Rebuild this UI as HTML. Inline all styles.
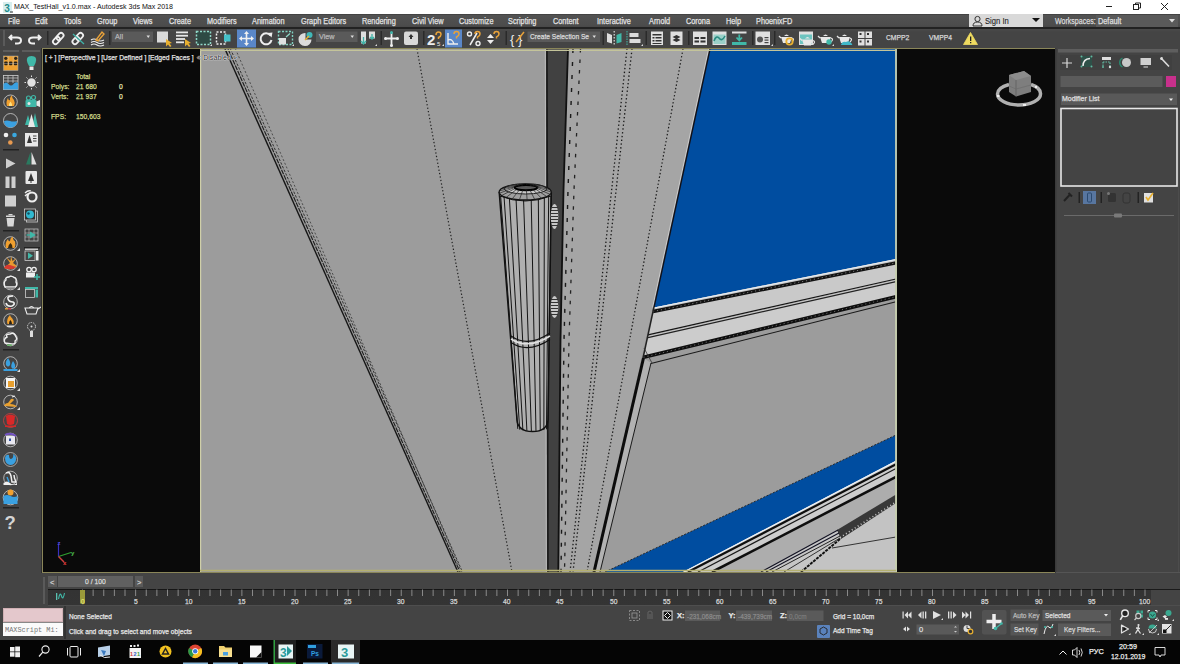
<!DOCTYPE html>
<html><head><meta charset="utf-8"><style>
html,body{margin:0;padding:0;}
body{width:1180px;height:664px;overflow:hidden;background:#444;position:relative;font-family:"Liberation Sans", sans-serif;}
.r{position:absolute;}
.t{position:absolute;white-space:pre;transform-origin:0 50%;-webkit-text-stroke:0.25px currentColor;}
</style></head><body>
<div class="r" style="left:0px;top:0px;width:1180px;height:14px;background:#ffffff;"></div><svg class="r" style="left:3px;top:2px;" width="10" height="11" viewBox="0 0 10 11"><rect x="0" y="0" width="9" height="11" fill="#d8eeee"/><text x="1.2" y="9.5" font-family="Liberation Sans" font-weight="bold" font-size="10" fill="#1e8c8c">3</text><rect x="7" y="9.5" width="3" height="1" fill="#333"/></svg><div class="t" style="left:14px;top:1.5px;font-size:8px;line-height:10px;color:#111;transform:scaleX(0.885);-webkit-text-stroke:0;">MAX_TestHall_v1.0.max - Autodesk 3ds Max 2018</div><svg class="r" style="left:1100px;top:0px;" width="80" height="14" viewBox="0 0 80 14"><line x1="6" y1="6.5" x2="12" y2="6.5" stroke="#222" stroke-width="1"/><rect x="33.5" y="4.5" width="5" height="5" fill="none" stroke="#222"/><path d="M35.5 4.5 V3 H40.5 V8 H38.5" fill="none" stroke="#222"/><path d="M61 3 L68 10 M68 3 L61 10" stroke="#222" stroke-width="1"/></svg><div class="r" style="left:0px;top:14px;width:1180px;height:13.5px;background:linear-gradient(#3c3c3c 0px,#525252 1.5px,#4c4c4c 11px,#484848 13px);"></div><div class="t" style="left:8px;top:16px;font-size:8.5px;line-height:10.5px;color:#e4e4e4;transform:scaleX(0.86);">File</div><div class="t" style="left:35px;top:16px;font-size:8.5px;line-height:10.5px;color:#e4e4e4;transform:scaleX(0.86);">Edit</div><div class="t" style="left:64px;top:16px;font-size:8.5px;line-height:10.5px;color:#e4e4e4;transform:scaleX(0.86);">Tools</div><div class="t" style="left:97px;top:16px;font-size:8.5px;line-height:10.5px;color:#e4e4e4;transform:scaleX(0.86);">Group</div><div class="t" style="left:133px;top:16px;font-size:8.5px;line-height:10.5px;color:#e4e4e4;transform:scaleX(0.86);">Views</div><div class="t" style="left:169px;top:16px;font-size:8.5px;line-height:10.5px;color:#e4e4e4;transform:scaleX(0.86);">Create</div><div class="t" style="left:207px;top:16px;font-size:8.5px;line-height:10.5px;color:#e4e4e4;transform:scaleX(0.86);">Modifiers</div><div class="t" style="left:252px;top:16px;font-size:8.5px;line-height:10.5px;color:#e4e4e4;transform:scaleX(0.86);">Animation</div><div class="t" style="left:301px;top:16px;font-size:8.5px;line-height:10.5px;color:#e4e4e4;transform:scaleX(0.86);">Graph Editors</div><div class="t" style="left:361.5px;top:16px;font-size:8.5px;line-height:10.5px;color:#e4e4e4;transform:scaleX(0.86);">Rendering</div><div class="t" style="left:412px;top:16px;font-size:8.5px;line-height:10.5px;color:#e4e4e4;transform:scaleX(0.86);">Civil View</div><div class="t" style="left:458.5px;top:16px;font-size:8.5px;line-height:10.5px;color:#e4e4e4;transform:scaleX(0.86);">Customize</div><div class="t" style="left:508px;top:16px;font-size:8.5px;line-height:10.5px;color:#e4e4e4;transform:scaleX(0.86);">Scripting</div><div class="t" style="left:552.5px;top:16px;font-size:8.5px;line-height:10.5px;color:#e4e4e4;transform:scaleX(0.86);">Content</div><div class="t" style="left:597px;top:16px;font-size:8.5px;line-height:10.5px;color:#e4e4e4;transform:scaleX(0.86);">Interactive</div><div class="t" style="left:649px;top:16px;font-size:8.5px;line-height:10.5px;color:#e4e4e4;transform:scaleX(0.86);">Arnold</div><div class="t" style="left:686px;top:16px;font-size:8.5px;line-height:10.5px;color:#e4e4e4;transform:scaleX(0.86);">Corona</div><div class="t" style="left:726px;top:16px;font-size:8.5px;line-height:10.5px;color:#e4e4e4;transform:scaleX(0.86);">Help</div><div class="t" style="left:756px;top:16px;font-size:8.5px;line-height:10.5px;color:#e4e4e4;transform:scaleX(0.86);">PhoenixFD</div><div class="r" style="left:969px;top:14px;width:74px;height:13.5px;background:#d9d9d9;"></div><svg class="r" style="left:972px;top:15px;" width="12" height="12" viewBox="0 0 12 12"><circle cx="5.5" cy="4" r="2.6" fill="none" stroke="#333" stroke-width="1"/><path d="M1 11 Q1 7 5.5 7 Q10 7 10 11 Z" fill="none" stroke="#333" stroke-width="1"/></svg><div class="t" style="left:985px;top:16px;font-size:8.5px;line-height:10.5px;color:#222;transform:scaleX(0.9);-webkit-text-stroke:0.1px #222;">Sign In</div><svg class="r" style="left:1032px;top:18px;" width="8" height="5" viewBox="0 0 8 5"><path d="M0 0 H8 L4 4 Z" fill="#111"/></svg><div class="t" style="left:1055px;top:16px;font-size:8.5px;line-height:10.5px;color:#dcdcdc;transform:scaleX(0.83);">Workspaces:</div><div class="r" style="left:1096px;top:14.5px;width:82px;height:12.5px;background:#5a5a5a;"></div><div class="t" style="left:1098px;top:16px;font-size:8.5px;line-height:10.5px;color:#e0e0e0;transform:scaleX(0.86);">Default</div><svg class="r" style="left:1169px;top:19px;" width="6" height="4" viewBox="0 0 6 4"><path d="M0 0 H6 L3 3.5 Z" fill="#ddd"/></svg><div class="r" style="left:0px;top:28px;width:1180px;height:20px;background:linear-gradient(#4c4c4c,#444 4px,#444);"></div><div class="r" style="left:0px;top:27px;width:1180px;height:1.5px;background:#222;"></div><div class="r" style="left:3px;top:30px;width:2px;height:16px;background:#5a5a5a;"></div><svg class="r" style="left:0;top:28px" width="1180" height="20" viewBox="0 28 1180 20"><path d="M12,35 L9.5,37.5 L12,40 M10,37.5 H17 Q21,37.5 21,40.5 Q21,43.5 17,43.5 H15" fill="none" stroke="#eee" stroke-width="2"/><path d="M38,35 L40.5,37.5 L38,40 M40,37.5 H33 Q29,37.5 29,40.5 Q29,43.5 33,43.5 H35" fill="none" stroke="#eee" stroke-width="2"/><rect x="47" y="31" width="1.5" height="14" fill="#2a2a2a"/><g fill="none" stroke="#eee" stroke-width="1.8"><rect x="52.5" y="38" width="8" height="5" rx="2.5" transform="rotate(-45 56.5 40.5)"/><rect x="56" y="34" width="8" height="5" rx="2.5" transform="rotate(-45 60 36.5)"/></g><g fill="none" stroke="#eee" stroke-width="1.8"><rect x="72" y="38" width="8" height="5" rx="2.5" transform="rotate(-45 76 40.5)"/><rect x="75.5" y="34" width="8" height="5" rx="2.5" transform="rotate(-45 79.5 36.5)"/></g><line x1="73" y1="34" x2="84" y2="44" stroke="#3fb3a8" stroke-width="1.3"/><g fill="none" stroke="#eee" stroke-width="1.2"><path d="M91,40 Q94,38 97,40 T104,40"/><path d="M91,42.5 Q94,40.5 97,42.5 T104,42.5"/><path d="M91,45 Q94,43 97,45 T104,45"/></g><path d="M96,40 L102,32 L104,34 L98,41 Z" fill="none" stroke="#e8a23a" stroke-width="1.4"/><rect x="109" y="31" width="1.5" height="14" fill="#2a2a2a"/><rect x="112" y="31.5" width="41" height="10.5" fill="#5a5a5a"/><path d="M146.5,35.5 H150 L148.25,38 Z" fill="#ddd"/><rect x="157" y="31.5" width="11" height="11" fill="#dadada"/><path d="M166,39 L166,46.5 L168,44.5 L170,47 L171.5,46 L169.5,43.5 L172,43 Z" fill="#e8b030"/><g fill="#e8e8e8"><rect x="176" y="31.5" width="12" height="1.8"/><rect x="176" y="34.8" width="12" height="1.8"/><rect x="176" y="38.1" width="9" height="1.8"/><rect x="176" y="41.4" width="8" height="1.8"/></g><path d="M185,39 L185,46.5 L187,44.5 L189,47 L190.5,46 L188.5,43.5 L191,43 Z" fill="#e8b030"/><rect x="196.5" y="31.5" width="14" height="13" fill="#2e4a44" stroke="#8fd8c8" stroke-width="1.5" stroke-dasharray="2,1.5"/><path d="M210,46 L212,44 L212,46 Z" fill="#ddd"/><rect x="216.5" y="32" width="9" height="12" fill="none" stroke="#eee" stroke-width="1.5" stroke-dasharray="2,1.5"/><rect x="224" y="34.5" width="6.5" height="7" fill="#46c0c8"/><rect x="237" y="29.5" width="19" height="18" fill="#5a87c8"/><g fill="#f0f0f0"><path d="M246.5,31 L249,34 H247.3 V37.7 H251 V36 L254,38.5 L251,41 V39.3 H247.3 V43 H249 L246.5,46 L244,43 H245.7 V39.3 H242 V41 L239,38.5 L242,36 V37.7 H245.7 V34 H244 Z"/></g><path d="M270.5,35.5 A5.5,5.5 0 1 0 271.5,40" fill="none" stroke="#eee" stroke-width="2"/><path d="M267.5,33 L272.5,32.5 L271.5,37.5 Z" fill="#eee"/><rect x="278.5" y="31.5" width="14" height="13" fill="none" stroke="#7fd0c0" stroke-width="1.4" stroke-dasharray="2,1.5"/><rect x="279" y="38" width="7" height="6.5" fill="#e0e0e0"/><path d="M286,37 L290,33.5" stroke="#8fd8c8" stroke-width="1.2"/><path d="M292,46 L294,44 L294,46 Z" fill="#ddd"/><path d="M305.5,33 A6.5,6.5 0 1 0 311.5,39.5 L305.5,39.5 Z" fill="#dcdcdc"/><circle cx="309.5" cy="35" r="3" fill="#40b8b8"/><path d="M305,40 L309,36" stroke="#e8b030" stroke-width="1.5"/><rect x="316" y="31.5" width="41.5" height="10.5" fill="#5a5a5a"/><path d="M350.5,35.5 H354 L352.25,38 Z" fill="#ddd"/><rect x="361" y="31.5" width="5" height="12" fill="#ddd"/><rect x="369" y="31.5" width="6" height="7" fill="#ddd"/><path d="M363.5,37 V44 M361,41 L363.5,44 L366,41" stroke="#3fb3a8" stroke-width="1.3" fill="none"/><path d="M372,34 V39 M370,37 L372,39 L374,37" stroke="#3fb3a8" stroke-width="1.3" fill="none"/><path d="M375,46 L377,44 L377,46 Z" fill="#ddd"/><rect x="380.5" y="31" width="1.5" height="14" fill="#2a2a2a"/><path d="M391.5,32 V46 M385,38.5 H398" stroke="#eee" stroke-width="1.8"/><circle cx="391.5" cy="32.5" r="1.5" fill="#3fb3a8"/><circle cx="391.5" cy="45.5" r="1.5" fill="#eee"/><circle cx="385.5" cy="38.5" r="1.5" fill="#eee"/><circle cx="397.5" cy="38.5" r="1.5" fill="#eee"/><rect x="404" y="31.5" width="14" height="13.5" rx="2" fill="#dadada"/><path d="M411,34 L413.5,37 H412 V39 H410 V37 H408.5 Z" fill="#333"/><rect x="423" y="31" width="1.5" height="14" fill="#2a2a2a"/><text x="427" y="45" font-family="Liberation Sans" font-size="15" font-weight="bold" fill="#eee">2</text><path d="M436,35 Q436,32 438.5,32 Q441,32 441,34.5 Q441,36.5 438.5,37.5 V39" fill="none" stroke="#e8a23a" stroke-width="1.5"/><text x="437" y="46" font-family="Liberation Sans" font-size="6" fill="#eee">5</text><path d="M442,46 L444,44 L444,46 Z" fill="#ddd"/><rect x="445" y="29.5" width="17" height="18" fill="#5a87c8"/><path d="M448,33 V44 H458 M448,40 Q452,38 454,44" fill="none" stroke="#eee" stroke-width="1.4"/><path d="M454,34 Q454,31.5 456.5,31.5 Q459,31.5 459,34 Q459,36 456.5,37 V38.5" fill="none" stroke="#e8a23a" stroke-width="1.5"/><circle cx="469.5" cy="34" r="2" fill="none" stroke="#eee" stroke-width="1.4"/><circle cx="478" cy="43.5" r="2" fill="none" stroke="#eee" stroke-width="1.4"/><line x1="470" y1="45" x2="477" y2="33" stroke="#eee" stroke-width="1.5"/><path d="M475,34 Q475,31.5 477.5,31.5 Q480,31.5 480,34 Q480,36 477.5,37 V38.5" fill="none" stroke="#e8a23a" stroke-width="1.5"/><path d="M487,38 L490.5,34 L494,38 Z M487,40 L490.5,44 L494,40 Z" fill="#eee"/><path d="M494,34 Q494,31.5 496.5,31.5 Q499,31.5 499,34 Q499,36 496.5,37 V38.5" fill="none" stroke="#e8a23a" stroke-width="1.5"/><rect x="505.5" y="31" width="1.5" height="14" fill="#2a2a2a"/><text x="510" y="43.5" font-family="Liberation Sans" font-size="13" fill="#eee">{</text><text x="518" y="43.5" font-family="Liberation Sans" font-size="13" fill="#eee">}</text><path d="M516,42 L524,32" stroke="#e8a23a" stroke-width="1.5"/><rect x="527.5" y="31.5" width="72.5" height="10.5" fill="#5a5a5a"/><path d="M592.5,35.5 H596 L594.25,38 Z" fill="#ddd"/><rect x="602.5" y="31" width="1.5" height="14" fill="#2a2a2a"/><path d="M607,33 L612,35 V43.5 L607,42 Z" fill="#ddd"/><path d="M621.5,33 L616.5,35 V43.5 L621.5,42 Z" fill="#40b8a8"/><path d="M614.2,31 V46" stroke="#ddd" stroke-width="1.2" stroke-dasharray="1.5,1.5"/><path d="M627,31 V46" stroke="#40b8a8" stroke-width="1" stroke-dasharray="1.5,1"/><rect x="629.5" y="33" width="9" height="4" fill="#ddd"/><rect x="629.5" y="39" width="11" height="4" fill="#ddd"/><path d="M641,46 L643,44 L643,46 Z" fill="#ddd"/><rect x="645.5" y="31" width="1.5" height="14" fill="#2a2a2a"/><rect x="651" y="31.5" width="12" height="13.5" fill="#e0e0e0"/><g fill="#333"><rect x="652.5" y="34" width="9" height="1.5"/><rect x="652.5" y="37" width="2" height="1.5"/><rect x="655.5" y="37" width="6" height="1.5"/><rect x="652.5" y="40" width="2" height="1.5"/><rect x="655.5" y="40" width="6" height="1.5"/><rect x="652.5" y="43" width="9" height="1"/></g><rect x="670.5" y="31.5" width="12" height="13.5" fill="#e0e0e0"/><path d="M672.5,37 L676.5,35 L680.5,37 L676.5,39 Z M672.5,40 L676.5,38 L680.5,40 L676.5,42 Z" fill="#333"/><rect x="688" y="31" width="1.5" height="14" fill="#2a2a2a"/><rect x="693" y="31.5" width="14" height="13.5" fill="#e0e0e0"/><g fill="#333"><rect x="694.5" y="37" width="4.5" height="2"/><rect x="700.5" y="37" width="5" height="2"/><rect x="694.5" y="40.5" width="4.5" height="2"/><rect x="700.5" y="40.5" width="5" height="2"/></g><rect x="712.5" y="31.5" width="14" height="13.5" fill="#e0e0e0"/><rect x="713.5" y="34.5" width="12" height="9.5" fill="#9ad0c8"/><path d="M714,41 Q716,35 719,38 Q722,42 725,36" fill="none" stroke="#2a8a80" stroke-width="1.6"/><rect x="732" y="31.5" width="14.5" height="2" fill="#e0e0e0"/><path d="M739.3,34.5 V40 M736.5,37.5 L739.3,40.5 L742,37.5" stroke="#40b8a8" stroke-width="1.8" fill="none"/><rect x="732" y="42" width="14.5" height="3" fill="#40b8a8"/><rect x="752" y="31" width="1.5" height="14" fill="#2a2a2a"/><rect x="755.5" y="31.5" width="14.5" height="13.5" fill="#e0e0e0"/><circle cx="760" cy="39.5" r="3" fill="#555"/><g fill="#444"><rect x="764.5" y="37" width="4" height="1.2"/><rect x="764.5" y="39.5" width="4" height="1.2"/><rect x="764.5" y="42" width="4" height="1.2"/></g><path d="M771,46 L773,44 L773,46 Z" fill="#ddd"/><rect x="774" y="31" width="1.5" height="14" fill="#2a2a2a"/><path d="M781,37 L783,43 H790 L792,37 Z" fill="#e8e8e8"/><path d="M784,36 Q786.5,33 789,36" fill="#e8e8e8"/><path d="M792,38 Q795,39 792,42" fill="none" stroke="#e8e8e8" stroke-width="1.2"/><path d="M781,38 L779,36" stroke="#e8e8e8" stroke-width="1.3"/><circle cx="789.5" cy="41.5" r="3.2" fill="none" stroke="#e8b030" stroke-width="1.8"/><rect x="799" y="31.5" width="14" height="13.5" fill="#e0e0e0"/><rect x="800" y="34.5" width="12" height="9.5" fill="#6cc4c0"/><path d="M802,39.5 L804,45.5 H811 L813,39.5 Z" fill="#e8e8e8"/><path d="M805,38.5 Q807.5,35.5 810,38.5" fill="#e8e8e8"/><path d="M813,40.5 Q816,41.5 813,44.5" fill="none" stroke="#e8e8e8" stroke-width="1.2"/><path d="M802,40.5 L800,38.5" stroke="#e8e8e8" stroke-width="1.3"/><path d="M820,37 L822,43 H829 L831,37 Z" fill="#e8e8e8"/><path d="M823,36 Q825.5,33 828,36" fill="#e8e8e8"/><path d="M831,38 Q834,39 831,42" fill="none" stroke="#e8e8e8" stroke-width="1.2"/><path d="M820,38 L818,36" stroke="#e8e8e8" stroke-width="1.3"/><circle cx="829" cy="42" r="2.7" fill="#40b8a8"/><path d="M832,46 L834,44 L834,46 Z" fill="#ddd"/><path d="M839,37 L841,43 H848 L850,37 Z" fill="#e8e8e8"/><path d="M842,36 Q844.5,33 847,36" fill="#e8e8e8"/><path d="M850,38 Q853,39 850,42" fill="none" stroke="#e8e8e8" stroke-width="1.2"/><path d="M839,38 L837,36" stroke="#e8e8e8" stroke-width="1.3"/><path d="M841,45 Q842,41 846,42 Q849,40 851,43 Q853,44 852,45 Z" fill="#40b8c8"/><g fill="#e0e0e0"><rect x="858" y="31.5" width="6.5" height="6.5"/><rect x="865.5" y="31.5" width="6.5" height="6.5"/><rect x="858" y="39" width="6.5" height="6.5"/><rect x="865.5" y="39" width="6.5" height="6.5"/></g><g fill="#333"><rect x="859.5" y="33" width="2" height="2"/><rect x="867" y="33" width="2" height="2"/><rect x="859.5" y="40.5" width="2" height="2"/><rect x="867" y="40.5" width="2" height="2"/></g><path d="M970.5,32.5 L977.5,44.5 H963.5 Z" fill="#f0dc60" stroke="#f0dc60" stroke-width="0.8" stroke-linejoin="round"/><rect x="970" y="36.5" width="1.3" height="4.5" fill="#222"/><rect x="970" y="42" width="1.3" height="1.3" fill="#222"/></svg><div class="t" style="left:115px;top:32px;font-size:8px;line-height:10px;color:#b8b8b8;transform:scaleX(0.9);">All</div><div class="t" style="left:319px;top:32px;font-size:8px;line-height:10px;color:#b8b8b8;transform:scaleX(0.9);">View</div><div class="t" style="left:530px;top:32px;font-size:8px;line-height:10px;color:#dcdcdc;transform:scaleX(0.83);">Create Selection Se</div><div class="t" style="left:885.5px;top:33px;font-size:7.5px;line-height:9.5px;color:#d8d8d8;transform:scaleX(0.9);">CMPP2</div><div class="t" style="left:929px;top:33px;font-size:7.5px;line-height:9.5px;color:#d8d8d8;transform:scaleX(0.9);">VMPP4</div><div class="r" style="left:41.5px;top:47.7px;width:1014px;height:525.8px;background:#0a0a0a;box-sizing:border-box;border:1.9px solid #8a8659;"></div><svg class="r" style="left:200px;top:49px" width="697" height="523" viewBox="200 49 697 523"><rect x="200" y="49" width="697" height="523" fill="#9c9c9c"/><line x1="225" y1="49" x2="458" y2="572" stroke="#161616" stroke-width="1.4" opacity="1"/><line x1="228" y1="49" x2="460" y2="572" stroke="#1e1e1e" stroke-width="1.1" stroke-dasharray="5,1" opacity="1"/><line x1="230.5" y1="49" x2="462.5" y2="572" stroke="#333" stroke-width="1.0" stroke-dasharray="2.5,1.5" opacity="1"/><line x1="235.5" y1="49" x2="461.5" y2="572" stroke="#444" stroke-width="0.9" stroke-dasharray="2,2" opacity="1"/><line x1="417" y1="49" x2="512" y2="572" stroke="#222" stroke-width="1.2" stroke-dasharray="1.3,2.2" opacity="1"/><polygon points="546,49 568,49 563.5,190 560.5,340 558,572 547,572" fill="#414141" /><line x1="545.3" y1="49" x2="546.3" y2="572" stroke="#c0c0c0" stroke-width="0.8" opacity="1"/><line x1="547" y1="49" x2="548" y2="572" stroke="#181818" stroke-width="1.6" opacity="1"/><polygon points="568,49 710,49 594,572 558,572 560.5,340 563.5,190" fill="#a5a5a5" /><polyline points="568,49 563.5,190 560.5,340 558.3,572" fill="none" stroke="#111" stroke-width="1.8"/><polyline points="573,49 568,190 564,340 561,572" fill="none" stroke="#1a1a1a" stroke-width="1.4" stroke-dasharray="4,9"/><polyline points="580.5,49 574,190 569,340 564.5,572" fill="none" stroke="#222" stroke-width="1.3" stroke-dasharray="3.5,7"/><line x1="627" y1="49" x2="570" y2="572" stroke="#1a1a1a" stroke-width="1.3" stroke-dasharray="1.4,2.4" opacity="1"/><line x1="632" y1="49" x2="573" y2="572" stroke="#1a1a1a" stroke-width="1.3" stroke-dasharray="1.4,2.4" opacity="1"/><line x1="683" y1="49" x2="587" y2="572" stroke="#1a1a1a" stroke-width="1.2" stroke-dasharray="1.4,2.2" opacity="1"/><polygon points="710,49 897,49 897,258.7 654,307.4" fill="#004da0" /><line x1="708.6" y1="49" x2="652.6" y2="307.4" stroke="#d8d8d8" stroke-width="0.9" opacity="0.8"/><line x1="710" y1="49" x2="654" y2="307.4" stroke="#101018" stroke-width="1.4" opacity="1"/><polygon points="654,307.4 896,258.9 896,280 648,336" fill="#c9c9c9" /><polygon points="648,336 896,280 896,297 643.5,357.7" fill="#cccccc" /><line x1="654" y1="308" x2="896" y2="259.5" stroke="#e8f0f8" stroke-width="1.0" opacity="1"/><line x1="653" y1="311.5" x2="896" y2="262.8" stroke="#121212" stroke-width="3.4" opacity="1"/><line x1="653" y1="311.5" x2="896" y2="262.8" stroke="#777" stroke-width="1.0" stroke-dasharray="1.2,2.8" opacity="1"/><line x1="648" y1="334.8" x2="896" y2="279" stroke="#151515" stroke-width="1.2" opacity="1"/><line x1="648" y1="337.6" x2="896" y2="281.6" stroke="#222" stroke-width="1.2" opacity="1"/><line x1="643.5" y1="357.3" x2="896" y2="296.7" stroke="#0e0e0e" stroke-width="3.6" opacity="1"/><line x1="643.5" y1="357.3" x2="896" y2="296.7" stroke="#666" stroke-width="1.0" stroke-dasharray="1.2,2.8" opacity="1"/><line x1="645" y1="365" x2="896" y2="301.8" stroke="#1a1a1a" stroke-width="1.1" opacity="1"/><line x1="654" y1="307" x2="643" y2="358" stroke="#222" stroke-width="1.5" opacity="1"/><polygon points="643.5,358 651,363 600,572 594,572" fill="#b2b2b2" /><line x1="643.5" y1="358" x2="594" y2="572" stroke="#0c0c0c" stroke-width="3.0" opacity="1"/><line x1="651" y1="363" x2="600" y2="572" stroke="#1a1a1a" stroke-width="1.0" opacity="1"/><line x1="644" y1="348" x2="652" y2="363" stroke="#333" stroke-width="0.8" opacity="1"/><polygon points="605,572 896,435 896,460.8 683,572" fill="#004da0" /><line x1="605" y1="572" x2="896" y2="435" stroke="#2a2a2a" stroke-width="1.0" stroke-dasharray="2,1.5" opacity="1"/><polygon points="683,572 896,460.8 896,476.5 712,572" fill="#cdcdcd" /><polygon points="712,572 896,476.5 896,497 838,531 761,572" fill="#adadad" /><polygon points="761,572 838,530 840,539 801,572" fill="#c6c6c6" /><polygon points="801,572 840,539 896,503 896,572" fill="#c3c3c3" /><line x1="683" y1="572.5" x2="896" y2="461.3" stroke="#eef4fa" stroke-width="1.1" opacity="1"/><line x1="688" y1="572" x2="896" y2="464.3" stroke="#0e0e0e" stroke-width="2.2" opacity="1"/><line x1="698" y1="572" x2="896" y2="468.5" stroke="#1a1a1a" stroke-width="1.2" opacity="1"/><line x1="712" y1="572" x2="896" y2="476.8" stroke="#0e0e0e" stroke-width="2.6" opacity="1"/><polygon points="837,530 896,494.5 896,503 841,539" fill="#383838" /><line x1="840" y1="537.5" x2="896" y2="502" stroke="#ccc" stroke-width="1.6" stroke-dasharray="1,2.5" opacity="1"/><line x1="832" y1="548" x2="896" y2="537" stroke="#222" stroke-width="0.9" opacity="1"/><line x1="761" y1="572" x2="838" y2="530" stroke="#112" stroke-width="1.1" opacity="1"/><line x1="766" y1="572" x2="839" y2="533" stroke="#112" stroke-width="1.1" opacity="1"/><line x1="772" y1="572" x2="840" y2="536" stroke="#222" stroke-width="1.0" opacity="1"/><line x1="784" y1="572" x2="840" y2="538" stroke="#333" stroke-width="1.0" opacity="1"/><line x1="801" y1="572" x2="840" y2="539" stroke="#111" stroke-width="2.0" stroke-dasharray="3,1" opacity="1"/><path d="M499.2,192 L551.3,192 L548,420 Q547,431.5 532.5,431.5 Q518,431.5 517,420 Z" fill="#b0b0b0"/><line x1="550.95" y1="196" x2="547.81" y2="428.44712679852853" stroke="#151515" stroke-width="1.0" opacity="1"/><line x1="548.68" y1="196" x2="546.46" y2="429.3016512173527" stroke="#151515" stroke-width="1.0" opacity="1"/><line x1="544.34" y1="196" x2="543.86" y2="430.04051821331274" stroke="#151515" stroke-width="1.0" opacity="1"/><line x1="538.31" y1="196" x2="540.26" y2="430.5980762113533" stroke="#151515" stroke-width="1.0" opacity="1"/><line x1="531.13" y1="196" x2="535.97" y2="430.92478373654546" stroke="#151515" stroke-width="1.0" opacity="1"/><line x1="523.44" y1="196" x2="531.38" y2="430.99161139154353" stroke="#151515" stroke-width="1.0" opacity="1"/><line x1="515.92" y1="196" x2="526.88" y2="430.7926212459326" stroke="#151515" stroke-width="1.0" opacity="1"/><line x1="509.25" y1="196" x2="522.9" y2="430.34549444740406" stroke="#151515" stroke-width="1.0" opacity="1"/><line x1="504.0" y1="196" x2="519.76" y2="429.68996017419084" stroke="#151515" stroke-width="1.0" opacity="1"/><line x1="500.65" y1="196" x2="517.76" y2="428.8842655232327" stroke="#151515" stroke-width="1.0" opacity="1"/><path d="M499.2,192 L517,420 Q518,431.5 532.5,431.5 Q547,431.5 548,420 L551.3,192" fill="none" stroke="#111" stroke-width="1.5"/><ellipse cx="525.2" cy="192" rx="26.1" ry="8" fill="#a0a0a0" stroke="#111" stroke-width="1.3"/><ellipse cx="525.5" cy="189" rx="21" ry="5" fill="#c8c8c8" stroke="#222" stroke-width="1"/><ellipse cx="526" cy="187.6" rx="11.5" ry="2.6" fill="#5a5a5a" stroke="#000" stroke-width="2"/><line x1="551.2" y1="192.0" x2="537.5" y2="187.6" stroke="#222" stroke-width="0.7" opacity="1"/><line x1="550.04" y1="194.36" x2="536.97" y2="188.34" stroke="#222" stroke-width="0.7" opacity="1"/><line x1="546.68" y1="196.51" x2="535.41" y2="189.01" stroke="#222" stroke-width="0.7" opacity="1"/><line x1="541.41" y1="198.25" x2="532.98" y2="189.55" stroke="#222" stroke-width="0.7" opacity="1"/><line x1="534.7" y1="199.45" x2="529.88" y2="189.93" stroke="#222" stroke-width="0.7" opacity="1"/><line x1="527.14" y1="199.98" x2="526.4" y2="190.09" stroke="#222" stroke-width="0.7" opacity="1"/><line x1="519.41" y1="199.8" x2="522.83" y2="190.04" stroke="#222" stroke-width="0.7" opacity="1"/><line x1="512.2" y1="198.93" x2="519.5" y2="189.77" stroke="#222" stroke-width="0.7" opacity="1"/><line x1="506.14" y1="197.44" x2="516.7" y2="189.3" stroke="#222" stroke-width="0.7" opacity="1"/><line x1="501.77" y1="195.47" x2="514.69" y2="188.68" stroke="#222" stroke-width="0.7" opacity="1"/><line x1="499.49" y1="193.19" x2="513.63" y2="187.97" stroke="#222" stroke-width="0.7" opacity="1"/><line x1="499.49" y1="190.81" x2="513.63" y2="187.23" stroke="#222" stroke-width="0.7" opacity="1"/><line x1="501.77" y1="188.53" x2="514.69" y2="186.52" stroke="#222" stroke-width="0.7" opacity="1"/><line x1="506.14" y1="186.56" x2="516.7" y2="185.9" stroke="#222" stroke-width="0.7" opacity="1"/><line x1="512.2" y1="185.07" x2="519.5" y2="185.43" stroke="#222" stroke-width="0.7" opacity="1"/><line x1="519.41" y1="184.2" x2="522.83" y2="185.16" stroke="#222" stroke-width="0.7" opacity="1"/><line x1="527.14" y1="184.02" x2="526.4" y2="185.11" stroke="#222" stroke-width="0.7" opacity="1"/><line x1="534.7" y1="184.55" x2="529.88" y2="185.27" stroke="#222" stroke-width="0.7" opacity="1"/><line x1="541.41" y1="185.75" x2="532.98" y2="185.65" stroke="#222" stroke-width="0.7" opacity="1"/><line x1="546.68" y1="187.49" x2="535.41" y2="186.19" stroke="#222" stroke-width="0.7" opacity="1"/><line x1="550.04" y1="189.64" x2="536.97" y2="186.86" stroke="#222" stroke-width="0.7" opacity="1"/><path d="M500,196 Q525,206 551,196" fill="none" stroke="#111" stroke-width="1"/><path d="M511,336 Q528,348 550,333" fill="none" stroke="#111" stroke-width="1.2"/><path d="M511,339 Q528,350 550,336" fill="none" stroke="#e0e0e0" stroke-width="1.5"/><path d="M511,342.5 Q528,354 550,339.5" fill="none" stroke="#111" stroke-width="1.1"/><ellipse cx="554.5" cy="216.5" rx="3.8" ry="12.5" fill="#c8c8c8"/><rect x="551" y="207" width="7" height="1" fill="#333"/><rect x="551" y="210" width="7" height="1" fill="#333"/><rect x="551" y="213" width="7" height="1" fill="#333"/><rect x="551" y="216" width="7" height="1" fill="#333"/><rect x="551" y="219" width="7" height="1" fill="#333"/><rect x="551" y="222" width="7" height="1" fill="#333"/><rect x="551" y="225" width="7" height="1" fill="#333"/><ellipse cx="554.5" cy="307.0" rx="3.8" ry="11.0" fill="#c8c8c8"/><rect x="551" y="299" width="7" height="1" fill="#333"/><rect x="551" y="302" width="7" height="1" fill="#333"/><rect x="551" y="305" width="7" height="1" fill="#333"/><rect x="551" y="308" width="7" height="1" fill="#333"/><rect x="551" y="311" width="7" height="1" fill="#333"/><rect x="551" y="314" width="7" height="1" fill="#333"/><line x1="200.6" y1="49" x2="200.6" y2="572" stroke="#cfcfa8" stroke-width="1.2" opacity="1"/><line x1="896" y1="49" x2="896" y2="572" stroke="#c8d0b0" stroke-width="1.8" opacity="1"/><line x1="200" y1="50.3" x2="896" y2="50.3" stroke="#c4c49a" stroke-width="1.3" opacity="1"/><line x1="200" y1="570.5" x2="896" y2="570.5" stroke="#b4b070" stroke-width="1.6" opacity="1"/></svg><div class="t" style="left:44.5px;top:53px;font-size:8px;line-height:10px;color:#e4e4e4;transform:scaleX(0.845);">[ + ] [Perspective ] [User Defined ] [Edged Faces ]</div><div class="t" style="left:197px;top:53px;font-size:7.5px;line-height:9.5px;color:#2a2a2a;transform:scaleX(0.95);-webkit-text-stroke:0;text-shadow:0 0 1px #fff,0 0 1px #fff,0 0 1px #fff;">&lt; Disabled &gt;</div><div class="t" style="left:76px;top:72px;font-size:7.5px;line-height:9.5px;color:#d4dc8c;transform:scaleX(0.9);">Total</div><div class="t" style="left:51px;top:82px;font-size:7.5px;line-height:9.5px;color:#d4dc8c;transform:scaleX(0.9);">Polys:</div><div class="t" style="left:76px;top:82px;font-size:7.5px;line-height:9.5px;color:#d4dc8c;transform:scaleX(0.9);">21 680</div><div class="t" style="left:119px;top:82px;font-size:7.5px;line-height:9.5px;color:#e6e6b0;transform:scaleX(0.9);">0</div><div class="t" style="left:51px;top:92px;font-size:7.5px;line-height:9.5px;color:#d4dc8c;transform:scaleX(0.9);">Verts:</div><div class="t" style="left:76px;top:92px;font-size:7.5px;line-height:9.5px;color:#d4dc8c;transform:scaleX(0.9);">21 937</div><div class="t" style="left:119px;top:92px;font-size:7.5px;line-height:9.5px;color:#e6e6b0;transform:scaleX(0.9);">0</div><div class="t" style="left:51px;top:111.5px;font-size:7.5px;line-height:9.5px;color:#d4dc8c;transform:scaleX(0.9);">FPS:</div><div class="t" style="left:76px;top:111.5px;font-size:7.5px;line-height:9.5px;color:#d4dc8c;transform:scaleX(0.9);">150,603</div><svg class="r" style="left:0;top:48px" width="42" height="525" viewBox="0 48 42 525"><rect x="3" y="50" width="16" height="2" fill="#5c5c5c"/><rect x="22" y="50" width="18" height="2" fill="#5c5c5c"/><rect x="3.5" y="56" width="14.5" height="14.5" fill="#eda030" stroke="#aaa" stroke-width="0.5"/><g fill="#2a2218"><circle cx="5.8" cy="58.3" r="1.6"/><circle cx="15.7" cy="58.3" r="1.6"/><rect x="4.3" y="61.5" width="3.4" height="3.8" rx="1"/><rect x="9" y="61.5" width="3.4" height="3.8" rx="1"/><rect x="13.8" y="61.5" width="3.4" height="3.8" rx="1"/></g><path d="M3.5,63.5 H18 M8.3,56 V66 M13.2,56 V66" stroke="#c8c8c8" stroke-width="0.4"/><rect x="3.5" y="75.5" width="14.5" height="14" fill="none" stroke="#cfcfcf" stroke-width="0.8"/><path d="M3.5,78 H18 M3.5,81 H18 M8,75.5 V83 M13,75.5 V83" stroke="#cfcfcf" stroke-width="0.7"/><path d="M3.5,84 Q6,81 8.5,84 T13.5,84 T18,83 V89.5 H3.5 Z" fill="#3aa0e0"/><circle cx="10.5" cy="101.8" r="6.8" fill="none" stroke="#cfcfcf" stroke-width="0.8"/><path d="M7,106 Q5.5,102 8,98 Q8.5,101 10,100 Q9.5,97 12,95.5 Q12,99 14,100 Q15.5,103 14,106 Z" fill="#f0a030"/><path d="M9,106 Q8.5,104 10.5,101.5 Q12.5,104 12,106 Z" fill="#ffe080"/><circle cx="10.5" cy="120.5" r="7" fill="none" stroke="#cfcfcf" stroke-width="0.8"/><path d="M4,121 Q7,120 10,121 T17,121 Q16.5,127 10.5,127.5 Q4.5,127 4,121 Z" fill="#3aa0e0"/><circle cx="6" cy="135" r="2.3" fill="#f0f0f0"/><circle cx="14.5" cy="135" r="2.3" fill="#3aa8e0"/><circle cx="10.3" cy="142.5" r="2.3" fill="#e89a50"/><rect x="3" y="149" width="16" height="1.5" fill="#222"/><path d="M6,158.5 L15.5,163.5 L6,168.5 Z" fill="#cfcfcf"/><rect x="5.5" y="176.5" width="4" height="11.5" fill="#cfcfcf"/><rect x="11.5" y="176.5" width="4" height="11.5" fill="#cfcfcf"/><rect x="5" y="195.5" width="11" height="11" fill="#cfcfcf"/><path d="M6.5,218 H14.5 L13.5,226.5 H7.5 Z" fill="#d8d8d8"/><rect x="6" y="215.5" width="9" height="1.5" fill="#d8d8d8"/><rect x="8.5" y="214" width="4" height="1.3" fill="#d8d8d8"/><rect x="3" y="230" width="16" height="1.5" fill="#222"/><circle cx="10.5" cy="243.5" r="6.8" fill="none" stroke="#cfcfcf" stroke-width="0.8"/><path d="M6,248 Q4.5,243 8,239 Q8.5,242 10,241 Q10,238 12.5,236.5 Q13,240 15,241.5 Q16,245 14.5,248 Z" fill="#f0a030"/><path d="M8,248 Q8,245 10.5,243 Q13,245 12.5,248 Z" fill="#3a2a10"/><path d="M17,251 L20,248 L20,251 Z" fill="#ddd"/><circle cx="10.5" cy="263.5" r="6.8" fill="none" stroke="#cfcfcf" stroke-width="0.8"/><path d="M4,268 L10,263 L6,257 L10.5,261 L11,256 L12.5,261 L16.5,258 L13,263 L17,266 Q12,271 4,268 Z" fill="#e89a30"/><path d="M4,268 Q6,264 10,265 L16,267 Q12,271 4,268 Z" fill="#d83a30"/><path d="M17,271 L20,268 L20,271 Z" fill="#ddd"/><circle cx="10.5" cy="283" r="6.8" fill="none" stroke="#cfcfcf" stroke-width="0.8"/><path d="M5,287 Q3,282 6,280 Q5,277 9,277 Q11,275 14,277.5 Q17,278 16,282 Q18,285 15,287 Z" fill="none" stroke="#eee" stroke-width="1.4"/><rect x="6" y="287.5" width="9" height="1.5" fill="#888"/><path d="M17,290 L20,287 L20,290 Z" fill="#ddd"/><circle cx="10.5" cy="302" r="6.8" fill="none" stroke="#cfcfcf" stroke-width="0.8"/><path d="M13,296 Q7,296 8,299 Q9,302 13,302 Q16,304 12,306 Q7,307 6,303" fill="none" stroke="#eee" stroke-width="1.6"/><rect x="5" y="308" width="3" height="1.5" fill="#e0a040"/><rect x="8" y="308" width="3" height="1.5" fill="#d04050"/><circle cx="10.5" cy="320.5" r="6.8" fill="none" stroke="#cfcfcf" stroke-width="0.8"/><path d="M7.5,324 Q6,319 10,315 Q11,318 12,318 Q14.5,321 13.5,324 Z" fill="#f0a030"/><path d="M9,324 Q9,321 10.5,320 Q12,322 12,324 Z" fill="#2a2010"/><rect x="7" y="325.5" width="7" height="1.5" fill="#ddd"/><circle cx="10.5" cy="339" r="6.8" fill="none" stroke="#cfcfcf" stroke-width="0.8"/><path d="M5,343 Q3,339 7,337 Q5,334 10,334 Q14,332 15.5,336 Q18,339 15,341 Q16,344 12,344 Z" fill="none" stroke="#eee" stroke-width="1.4"/><rect x="7" y="344.5" width="5" height="1.2" fill="#60c060"/><rect x="3" y="349" width="16" height="1.5" fill="#222"/><circle cx="10.5" cy="363.5" r="6.8" fill="none" stroke="#cfcfcf" stroke-width="0.8"/><path d="M8,358 Q5,362 6,365 Q8,368 10,365 Q11,362 8,358 Z M13,361 Q10.5,365 11.5,367.5 Q13,370 15,367.5 Q16,365 13,361 Z" fill="#3aa0e0"/><path d="M3.5,369 H17.5 V371 H3.5 Z" fill="#3aa0e0"/><path d="M17,372 L20,369 L20,372 Z" fill="#ddd"/><circle cx="10.5" cy="383" r="6.8" fill="none" stroke="#cfcfcf" stroke-width="0.8"/><rect x="6" y="378" width="9" height="10" fill="#f4f4f4"/><rect x="8" y="381" width="6" height="6" fill="#e8a030"/><path d="M17,391 L20,388 L20,391 Z" fill="#ddd"/><circle cx="10.5" cy="402" r="6.8" fill="none" stroke="#cfcfcf" stroke-width="0.8"/><path d="M4,406 Q5,403 8,403 L11,399 Q13,398 14,400 L10,404 Q15,404 17,407 Z" fill="#e8a030"/><path d="M12,397 L15,396" stroke="#eee" stroke-width="1.2"/><path d="M17,410 L20,407 L20,410 Z" fill="#ddd"/><circle cx="10.5" cy="420.5" r="7" fill="none" stroke="#d04040" stroke-width="0.8"/><path d="M6,416 Q10,413 15,416 L14,424 Q10,426 7,424 Z" fill="#d82828"/><rect x="5" y="425.5" width="11" height="1.5" fill="#d82828"/><circle cx="10.5" cy="440" r="6.8" fill="none" stroke="#cfcfcf" stroke-width="0.8"/><rect x="6" y="435.5" width="9" height="9" fill="#e8e8f0"/><path d="M5,435 Q10,432 16,436" stroke="#7050c0" stroke-width="2" fill="none"/><rect x="9" y="438.5" width="2" height="2.5" fill="#3050a0"/><circle cx="10.5" cy="459.5" r="7" fill="none" stroke="#bbb" stroke-width="0.8"/><path d="M5,458 Q6,454 9,455 Q9,459 11,459 Q14,458 13,454 Q17,456 16,460 Q15,465 10,465 Q5,464 5,458 Z" fill="#3aa0e0"/><circle cx="10.5" cy="478" r="6.8" fill="none" stroke="#cfcfcf" stroke-width="0.8"/><path d="M6,473 Q10,471 11,476 L12,482 H16 Q14,478 14,475" fill="none" stroke="#eee" stroke-width="1.5"/><path d="M3.5,483 Q7,480 10,483 T17,483 V485 H3.5 Z" fill="#eee"/><path d="M7,477 L9,482" stroke="#3aa0e0" stroke-width="1.4"/><circle cx="10.5" cy="497.5" r="7.3" fill="none" stroke="#cfcfcf" stroke-width="0.8"/><circle cx="10.5" cy="492.5" r="3" fill="#f0a030"/><path d="M3.5,496 Q7,494 10.5,496 T17.5,496 V504 H3.5 Z" fill="#3aa0e0"/><rect x="3" y="507" width="16" height="1.5" fill="#222"/><text x="4.5" y="528.5" font-family="Liberation Sans" font-size="18.5" font-weight="bold" fill="#d4d4d4">?</text><path d="M27.5,63 Q25,56 31.5,56 Q38,56 35.5,63 L34,66 H29 Z" fill="#40b8a8"/><rect x="29.5" y="66.5" width="4" height="3.5" fill="#e8e8e8"/><circle cx="31.5" cy="82.5" r="4.2" fill="#e0e0e0"/><g stroke="#e0e0e0" stroke-width="1"><path d="M31.5,75.5 V77 M31.5,88 V89.5 M24.5,82.5 H26 M37,82.5 H38.5 M26.5,77.5 L27.5,78.5 M35.5,86.5 L36.5,87.5 M36.5,77.5 L35.5,78.5 M27.5,86.5 L26.5,87.5"/></g><rect x="25.5" y="100" width="11" height="7" rx="1" fill="#40b8a8"/><path d="M36.5,101.5 L40,100 V107 L36.5,105.5 Z" fill="#e8e8e8"/><circle cx="28.5" cy="98" r="2" fill="none" stroke="#40b8a8" stroke-width="1.2"/><circle cx="33.5" cy="97.5" r="2" fill="none" stroke="#40b8a8" stroke-width="1.2"/><circle cx="29" cy="103.5" r="1.5" fill="#e8e8e8"/><path d="M25,125 L28,115 L31,125 Z M32,127 L35,113 L38,127 Z" fill="#40b8a8"/><path d="M28,127 L31.5,114 L35,127 Z" fill="#e8e8e8"/><rect x="25" y="133" width="13" height="13.5" fill="#e8e8e8"/><path d="M27,143 L29.5,135 L32,143 Z" fill="#333"/><g fill="#444"><rect x="33" y="135.5" width="3.5" height="1"/><rect x="33" y="138" width="3.5" height="1"/><rect x="33" y="140.5" width="3.5" height="1"/></g><path d="M26,164.5 L30.5,152 L30.5,164.5 Z" fill="#2a7a60"/><path d="M31.5,152 L36.5,164.5 H31.5 Z" fill="#e0e0e0"/><rect x="25.5" y="171" width="11.5" height="13" rx="1" fill="#e8e8e8"/><path d="M28,181 L31,173 L34,181 Z" fill="#333"/><rect x="30.5" y="181" width="1" height="2" fill="#333"/><circle cx="32" cy="197" r="4.5" fill="none" stroke="#eee" stroke-width="2.2"/><path d="M25,193 Q28,190 31,191 M25,196 Q27,194 28,194" stroke="#eee" stroke-width="1.3" fill="none"/><rect x="26.5" y="211" width="11" height="11" fill="none" stroke="#ccc" stroke-width="0.8"/><rect x="24.5" y="209" width="11" height="11" fill="#333" stroke="#ccc" stroke-width="0.8"/><circle cx="30" cy="214.5" r="4" fill="#30b8d0"/><circle cx="28.5" cy="213.5" r="1.2" fill="#105060"/><rect x="25" y="229" width="13" height="12" fill="none" stroke="#ccc" stroke-width="0.7"/><path d="M25,233 H38 M25,237 H38 M29,229 V241 M34,229 V241" stroke="#ccc" stroke-width="0.5"/><path d="M30,231.5 L36,235 L30,238.5 Z" fill="#40b8a8"/><rect x="26.5" y="234.3" width="4" height="1.4" fill="#40b8a8"/><rect x="24" y="247" width="16" height="1.5" fill="#222"/><rect x="25" y="248.5" width="13" height="1.5" fill="#ccc"/><rect x="25" y="251" width="10" height="9.5" fill="none" stroke="#ccc" stroke-width="0.8"/><path d="M28,252.5 L33,255.7 L28,259 Z" fill="#40b8a8"/><rect x="36" y="251" width="2.5" height="9.5" fill="#eee"/><circle cx="29" cy="269.5" r="2.2" fill="none" stroke="#eee" stroke-width="1.3"/><circle cx="34" cy="269.5" r="2.2" fill="none" stroke="#eee" stroke-width="1.3"/><rect x="26" y="272.5" width="9" height="5" fill="#eee"/><path d="M37,274 V280 M34,277 H40" stroke="#40b8a8" stroke-width="1.6"/><rect x="25" y="287" width="13" height="2" fill="#40b8a8"/><rect x="25.5" y="289.5" width="9" height="8" fill="none" stroke="#ccc" stroke-width="0.8"/><rect x="35.5" y="289.5" width="2.5" height="8" fill="#40b8a8"/><path d="M25,308 L27,314 H36 L38,308 Z M29,308 Q31.5,305 34,308" fill="none" stroke="#eee" stroke-width="1.1"/><path d="M38,309 L41,307" stroke="#eee" stroke-width="1.1"/><circle cx="31.5" cy="326.5" r="4" fill="none" stroke="#ddd" stroke-width="0.9" stroke-dasharray="1.5,1"/><circle cx="31.5" cy="326.5" r="1" fill="#ddd"/><rect x="30" y="331" width="3" height="6" fill="#ddd"/><rect x="41" y="48" width="1" height="525" fill="#2e2e2e"/></svg><svg class="r" style="left:1054px;top:48px" width="126" height="525" viewBox="1054 48 126 525"><rect x="1058" y="49" width="120" height="3.5" fill="#5e5e5e"/><rect x="1060" y="55" width="112" height="15" fill="#404040"/><path d="M1067,58 V68 M1062,63 H1072" stroke="#d8d8d8" stroke-width="1.2"/><rect x="1081" y="56" width="11" height="11" fill="#2e5048"/><g fill="#60b8a0"><circle cx="1081.5" cy="56.5" r="1"/><circle cx="1091.5" cy="56.5" r="1"/><circle cx="1081.5" cy="66.5" r="1"/><circle cx="1091.5" cy="66.5" r="1"/></g><path d="M1083,66 Q1083,59 1090,58.5" fill="none" stroke="#eee" stroke-width="1.5"/><rect x="1102" y="57" width="9" height="3" fill="#ddd"/><path d="M1103,62 V67 M1103,62 H1110 V67" fill="none" stroke="#60b8a0" stroke-width="1.2" stroke-dasharray="1.5,1"/><circle cx="1103" cy="67" r="1" fill="#60b8a0"/><circle cx="1110" cy="67" r="1.2" fill="#ddd"/><path d="M1122.5,58 A5,5 0 0 0 1122.5,67" fill="none" stroke="#2a8a70" stroke-width="1.3"/><circle cx="1126.5" cy="62.5" r="4.5" fill="#c8c8c8"/><rect x="1140.5" y="58" width="10.5" height="7" fill="#d0d0d0"/><rect x="1143.5" y="66.5" width="4.5" height="1" fill="#ddd"/><path d="M1161,58 L1169,66.5" stroke="#ddd" stroke-width="1.6"/><path d="M1160,59 Q1160,56.5 1162.5,57 L1163,60 L1161,60 Z" fill="#ddd"/><rect x="1060.5" y="76" width="102" height="11" fill="#5b5b5b"/><rect x="1166" y="76" width="10" height="11" fill="#c8308c"/><rect x="1061" y="93.5" width="116" height="11.5" fill="#595959"/><path d="M1169,98.5 H1173 L1171,101 Z" fill="#eee"/><rect x="1061" y="108.5" width="116" height="77.5" fill="#444" stroke="#e8e8e8" stroke-width="1.6"/><path d="M1064,201 L1070,194.5 M1068.5,193 L1072,196.5" stroke="#222" stroke-width="2"/><rect x="1078.5" y="192" width="1.5" height="11" fill="#222"/><rect x="1083" y="191" width="13" height="13" fill="#5876a0"/><rect x="1087.5" y="193" width="4" height="9" rx="1" fill="none" stroke="#2a4a70" stroke-width="1"/><rect x="1100.5" y="192" width="1.5" height="11" fill="#222"/><rect x="1108" y="193" width="8" height="9" rx="1.5" fill="#333"/><circle cx="1108.5" cy="193.5" r="1.5" fill="#777"/><rect x="1123" y="193" width="7" height="10" rx="2" fill="none" stroke="#333" stroke-width="1"/><rect x="1137.5" y="192" width="1.5" height="11" fill="#222"/><rect x="1144" y="193" width="9" height="9.5" fill="#e0e0e0"/><path d="M1146,197 L1148,200 L1153,193" stroke="#e8b030" stroke-width="1.6" fill="none"/><rect x="1064" y="215" width="110" height="1" fill="#6a6a6a"/><rect x="1114" y="213.5" width="8" height="4" rx="1" fill="#7a7a7a"/><rect x="1055" y="48" width="1.5" height="525" fill="#3a3a3a"/></svg><div class="t" style="left:1062px;top:94px;font-size:8px;line-height:10px;color:#e0e0e0;transform:scaleX(0.87);">Modifier List</div><svg class="r" style="left:990px;top:62px" width="60" height="50" viewBox="990 62 60 50"><path d="M997.5,94 A21.5,11 0 0 0 1040.5,94" fill="none" stroke="#b0b0b0" stroke-width="3.5"/><path d="M997.5,94 A21.5,11 0 0 1 1009,84.5 M1031,84.5 A21.5,11 0 0 1 1040.5,94" fill="none" stroke="#b0b0b0" stroke-width="3.5"/><path d="M1009,75 L1024,71 L1031,76 V92 L1016,96.5 L1009,92 Z" fill="#7e7e7e"/><path d="M1009,75 L1024,71 L1031,76 L1016,80 Z" fill="#8c8c8c"/><path d="M1016,80 V96.5" stroke="#5a5a5a" stroke-width="0.7"/><path d="M1009,86 L1016,89 L1031,85" stroke="#6a6a6a" stroke-width="0.6" fill="none"/><g fill="#eee"><rect x="997" y="95" width="2.5" height="2"/><rect x="1035" y="86" width="2" height="2"/><rect x="1023" y="104" width="3" height="2"/></g></svg><svg class="r" style="left:50px;top:535px" width="40" height="35" viewBox="50 535 40 35"><path d="M58.5,556.5 V545" stroke="#3a30c0" stroke-width="1.2"/><path d="M58.5,556.5 L71,552.5" stroke="#30a030" stroke-width="1.2"/><path d="M58.5,556.5 L64,562" stroke="#d04040" stroke-width="1.4"/><text x="57.5" y="545" font-size="6" fill="#5a50f0" font-family="Liberation Sans" font-weight="bold">z</text><text x="71" y="555" font-size="6" fill="#50c050" font-family="Liberation Sans" font-weight="bold">y</text><text x="63" y="565" font-size="6" fill="#f04040" font-family="Liberation Sans" font-weight="bold">x</text></svg><div class="r" style="left:43px;top:577px;width:1.5px;height:27px;background:#5a5a5a;"></div><div class="r" style="left:48px;top:576px;width:8.5px;height:10.5px;background:#5a5a5a;"></div><div class="r" style="left:58px;top:576px;width:75px;height:10.5px;background:#606060;"></div><div class="r" style="left:135px;top:576px;width:8px;height:10.5px;background:#5a5a5a;"></div><div class="t" style="left:50px;top:577.5px;font-size:7.5px;line-height:9.5px;color:#cfcfcf;transform:scaleX(1.0);">&lt;</div><div class="t" style="left:137px;top:577.5px;font-size:7.5px;line-height:9.5px;color:#cfcfcf;transform:scaleX(1.0);">&gt;</div><div class="t" style="left:84.5px;top:577px;font-size:7.5px;line-height:9.5px;color:#dcdcdc;transform:scaleX(0.9);">0 / 100</div><div class="r" style="left:47.5px;top:588.5px;width:1103px;height:16px;background:linear-gradient(#161616 0px,#161616 1px,#333 1.5px,#343434);"></div><svg class="r" style="left:0;top:0" width="1180" height="664" viewBox="0 0 1180 664"><rect x="82.00" y="589.5" width="1" height="6.5" fill="#8a8a8a"/><rect x="92.62" y="589.5" width="1" height="6.5" fill="#8a8a8a"/><rect x="103.25" y="589.5" width="1" height="6.5" fill="#8a8a8a"/><rect x="113.88" y="589.5" width="1" height="6.5" fill="#8a8a8a"/><rect x="124.50" y="589.5" width="1" height="6.5" fill="#8a8a8a"/><rect x="135.12" y="589.5" width="1" height="6.5" fill="#8a8a8a"/><rect x="145.75" y="589.5" width="1" height="6.5" fill="#8a8a8a"/><rect x="156.38" y="589.5" width="1" height="6.5" fill="#8a8a8a"/><rect x="167.00" y="589.5" width="1" height="6.5" fill="#8a8a8a"/><rect x="177.62" y="589.5" width="1" height="6.5" fill="#8a8a8a"/><rect x="188.25" y="589.5" width="1" height="6.5" fill="#8a8a8a"/><rect x="198.88" y="589.5" width="1" height="6.5" fill="#8a8a8a"/><rect x="209.50" y="589.5" width="1" height="6.5" fill="#8a8a8a"/><rect x="220.12" y="589.5" width="1" height="6.5" fill="#8a8a8a"/><rect x="230.75" y="589.5" width="1" height="6.5" fill="#8a8a8a"/><rect x="241.38" y="589.5" width="1" height="6.5" fill="#8a8a8a"/><rect x="252.00" y="589.5" width="1" height="6.5" fill="#8a8a8a"/><rect x="262.62" y="589.5" width="1" height="6.5" fill="#8a8a8a"/><rect x="273.25" y="589.5" width="1" height="6.5" fill="#8a8a8a"/><rect x="283.88" y="589.5" width="1" height="6.5" fill="#8a8a8a"/><rect x="294.50" y="589.5" width="1" height="6.5" fill="#8a8a8a"/><rect x="305.12" y="589.5" width="1" height="6.5" fill="#8a8a8a"/><rect x="315.75" y="589.5" width="1" height="6.5" fill="#8a8a8a"/><rect x="326.38" y="589.5" width="1" height="6.5" fill="#8a8a8a"/><rect x="337.00" y="589.5" width="1" height="6.5" fill="#8a8a8a"/><rect x="347.62" y="589.5" width="1" height="6.5" fill="#8a8a8a"/><rect x="358.25" y="589.5" width="1" height="6.5" fill="#8a8a8a"/><rect x="368.88" y="589.5" width="1" height="6.5" fill="#8a8a8a"/><rect x="379.50" y="589.5" width="1" height="6.5" fill="#8a8a8a"/><rect x="390.12" y="589.5" width="1" height="6.5" fill="#8a8a8a"/><rect x="400.75" y="589.5" width="1" height="6.5" fill="#8a8a8a"/><rect x="411.38" y="589.5" width="1" height="6.5" fill="#8a8a8a"/><rect x="422.00" y="589.5" width="1" height="6.5" fill="#8a8a8a"/><rect x="432.62" y="589.5" width="1" height="6.5" fill="#8a8a8a"/><rect x="443.25" y="589.5" width="1" height="6.5" fill="#8a8a8a"/><rect x="453.88" y="589.5" width="1" height="6.5" fill="#8a8a8a"/><rect x="464.50" y="589.5" width="1" height="6.5" fill="#8a8a8a"/><rect x="475.12" y="589.5" width="1" height="6.5" fill="#8a8a8a"/><rect x="485.75" y="589.5" width="1" height="6.5" fill="#8a8a8a"/><rect x="496.38" y="589.5" width="1" height="6.5" fill="#8a8a8a"/><rect x="507.00" y="589.5" width="1" height="6.5" fill="#8a8a8a"/><rect x="517.62" y="589.5" width="1" height="6.5" fill="#8a8a8a"/><rect x="528.25" y="589.5" width="1" height="6.5" fill="#8a8a8a"/><rect x="538.88" y="589.5" width="1" height="6.5" fill="#8a8a8a"/><rect x="549.50" y="589.5" width="1" height="6.5" fill="#8a8a8a"/><rect x="560.12" y="589.5" width="1" height="6.5" fill="#8a8a8a"/><rect x="570.75" y="589.5" width="1" height="6.5" fill="#8a8a8a"/><rect x="581.38" y="589.5" width="1" height="6.5" fill="#8a8a8a"/><rect x="592.00" y="589.5" width="1" height="6.5" fill="#8a8a8a"/><rect x="602.62" y="589.5" width="1" height="6.5" fill="#8a8a8a"/><rect x="613.25" y="589.5" width="1" height="6.5" fill="#8a8a8a"/><rect x="623.88" y="589.5" width="1" height="6.5" fill="#8a8a8a"/><rect x="634.50" y="589.5" width="1" height="6.5" fill="#8a8a8a"/><rect x="645.12" y="589.5" width="1" height="6.5" fill="#8a8a8a"/><rect x="655.75" y="589.5" width="1" height="6.5" fill="#8a8a8a"/><rect x="666.38" y="589.5" width="1" height="6.5" fill="#8a8a8a"/><rect x="677.00" y="589.5" width="1" height="6.5" fill="#8a8a8a"/><rect x="687.62" y="589.5" width="1" height="6.5" fill="#8a8a8a"/><rect x="698.25" y="589.5" width="1" height="6.5" fill="#8a8a8a"/><rect x="708.88" y="589.5" width="1" height="6.5" fill="#8a8a8a"/><rect x="719.50" y="589.5" width="1" height="6.5" fill="#8a8a8a"/><rect x="730.12" y="589.5" width="1" height="6.5" fill="#8a8a8a"/><rect x="740.75" y="589.5" width="1" height="6.5" fill="#8a8a8a"/><rect x="751.38" y="589.5" width="1" height="6.5" fill="#8a8a8a"/><rect x="762.00" y="589.5" width="1" height="6.5" fill="#8a8a8a"/><rect x="772.62" y="589.5" width="1" height="6.5" fill="#8a8a8a"/><rect x="783.25" y="589.5" width="1" height="6.5" fill="#8a8a8a"/><rect x="793.88" y="589.5" width="1" height="6.5" fill="#8a8a8a"/><rect x="804.50" y="589.5" width="1" height="6.5" fill="#8a8a8a"/><rect x="815.12" y="589.5" width="1" height="6.5" fill="#8a8a8a"/><rect x="825.75" y="589.5" width="1" height="6.5" fill="#8a8a8a"/><rect x="836.38" y="589.5" width="1" height="6.5" fill="#8a8a8a"/><rect x="847.00" y="589.5" width="1" height="6.5" fill="#8a8a8a"/><rect x="857.62" y="589.5" width="1" height="6.5" fill="#8a8a8a"/><rect x="868.25" y="589.5" width="1" height="6.5" fill="#8a8a8a"/><rect x="878.88" y="589.5" width="1" height="6.5" fill="#8a8a8a"/><rect x="889.50" y="589.5" width="1" height="6.5" fill="#8a8a8a"/><rect x="900.12" y="589.5" width="1" height="6.5" fill="#8a8a8a"/><rect x="910.75" y="589.5" width="1" height="6.5" fill="#8a8a8a"/><rect x="921.38" y="589.5" width="1" height="6.5" fill="#8a8a8a"/><rect x="932.00" y="589.5" width="1" height="6.5" fill="#8a8a8a"/><rect x="942.62" y="589.5" width="1" height="6.5" fill="#8a8a8a"/><rect x="953.25" y="589.5" width="1" height="6.5" fill="#8a8a8a"/><rect x="963.88" y="589.5" width="1" height="6.5" fill="#8a8a8a"/><rect x="974.50" y="589.5" width="1" height="6.5" fill="#8a8a8a"/><rect x="985.12" y="589.5" width="1" height="6.5" fill="#8a8a8a"/><rect x="995.75" y="589.5" width="1" height="6.5" fill="#8a8a8a"/><rect x="1006.38" y="589.5" width="1" height="6.5" fill="#8a8a8a"/><rect x="1017.00" y="589.5" width="1" height="6.5" fill="#8a8a8a"/><rect x="1027.62" y="589.5" width="1" height="6.5" fill="#8a8a8a"/><rect x="1038.25" y="589.5" width="1" height="6.5" fill="#8a8a8a"/><rect x="1048.88" y="589.5" width="1" height="6.5" fill="#8a8a8a"/><rect x="1059.50" y="589.5" width="1" height="6.5" fill="#8a8a8a"/><rect x="1070.12" y="589.5" width="1" height="6.5" fill="#8a8a8a"/><rect x="1080.75" y="589.5" width="1" height="6.5" fill="#8a8a8a"/><rect x="1091.38" y="589.5" width="1" height="6.5" fill="#8a8a8a"/><rect x="1102.00" y="589.5" width="1" height="6.5" fill="#8a8a8a"/><rect x="1112.62" y="589.5" width="1" height="6.5" fill="#8a8a8a"/><rect x="1123.25" y="589.5" width="1" height="6.5" fill="#8a8a8a"/><rect x="1133.88" y="589.5" width="1" height="6.5" fill="#8a8a8a"/><rect x="1144.50" y="589.5" width="1" height="6.5" fill="#8a8a8a"/><rect x="80" y="590" width="5" height="13.5" fill="#9a9a3a"/><rect x="56" y="593" width="1.3" height="7" fill="#5ac0b0"/><path d="M58.5,599 Q60,591 61.5,596 Q63,601 64.5,593" fill="none" stroke="#40b8a8" stroke-width="1.1"/></svg><div class="t" style="left:133.525px;top:596.5px;font-size:7.5px;line-height:9.5px;color:#d8d8d8;transform:scaleX(0.9);">5</div><div class="t" style="left:184.55px;top:596.5px;font-size:7.5px;line-height:9.5px;color:#d8d8d8;transform:scaleX(0.9);">10</div><div class="t" style="left:237.675px;top:596.5px;font-size:7.5px;line-height:9.5px;color:#d8d8d8;transform:scaleX(0.9);">15</div><div class="t" style="left:290.8px;top:596.5px;font-size:7.5px;line-height:9.5px;color:#d8d8d8;transform:scaleX(0.9);">20</div><div class="t" style="left:343.925px;top:596.5px;font-size:7.5px;line-height:9.5px;color:#d8d8d8;transform:scaleX(0.9);">25</div><div class="t" style="left:397.05px;top:596.5px;font-size:7.5px;line-height:9.5px;color:#d8d8d8;transform:scaleX(0.9);">30</div><div class="t" style="left:450.175px;top:596.5px;font-size:7.5px;line-height:9.5px;color:#d8d8d8;transform:scaleX(0.9);">35</div><div class="t" style="left:503.3px;top:596.5px;font-size:7.5px;line-height:9.5px;color:#d8d8d8;transform:scaleX(0.9);">40</div><div class="t" style="left:556.425px;top:596.5px;font-size:7.5px;line-height:9.5px;color:#d8d8d8;transform:scaleX(0.9);">45</div><div class="t" style="left:609.55px;top:596.5px;font-size:7.5px;line-height:9.5px;color:#d8d8d8;transform:scaleX(0.9);">50</div><div class="t" style="left:662.675px;top:596.5px;font-size:7.5px;line-height:9.5px;color:#d8d8d8;transform:scaleX(0.9);">55</div><div class="t" style="left:715.8px;top:596.5px;font-size:7.5px;line-height:9.5px;color:#d8d8d8;transform:scaleX(0.9);">60</div><div class="t" style="left:768.925px;top:596.5px;font-size:7.5px;line-height:9.5px;color:#d8d8d8;transform:scaleX(0.9);">65</div><div class="t" style="left:822.05px;top:596.5px;font-size:7.5px;line-height:9.5px;color:#d8d8d8;transform:scaleX(0.9);">70</div><div class="t" style="left:875.175px;top:596.5px;font-size:7.5px;line-height:9.5px;color:#d8d8d8;transform:scaleX(0.9);">75</div><div class="t" style="left:928.3px;top:596.5px;font-size:7.5px;line-height:9.5px;color:#d8d8d8;transform:scaleX(0.9);">80</div><div class="t" style="left:981.425px;top:596.5px;font-size:7.5px;line-height:9.5px;color:#d8d8d8;transform:scaleX(0.9);">85</div><div class="t" style="left:1034.55px;top:596.5px;font-size:7.5px;line-height:9.5px;color:#d8d8d8;transform:scaleX(0.9);">90</div><div class="t" style="left:1087.675px;top:596.5px;font-size:7.5px;line-height:9.5px;color:#d8d8d8;transform:scaleX(0.9);">95</div><div class="t" style="left:1138.7px;top:596.5px;font-size:7.5px;line-height:9.5px;color:#d8d8d8;transform:scaleX(0.9);">100</div><div class="t" style="left:80.8px;top:596.5px;font-size:7px;line-height:9px;color:#e0e070;transform:scaleX(0.9);">0</div><div class="r" style="left:0px;top:605px;width:1180px;height:35px;background:#444444;"></div><div class="r" style="left:1150px;top:588.5px;width:30px;height:1.2px;background:#1a1a1a;"></div><div class="r" style="left:47.5px;top:604.5px;width:1132px;height:1px;background:#4e4e4e;"></div><div class="r" style="left:1056px;top:571.5px;width:124px;height:1px;background:#555;"></div><div class="r" style="left:1177.5px;top:120px;width:1px;height:452px;background:#4c4c4c;"></div><div class="r" style="left:3px;top:608px;width:60px;height:14px;background:#e4c8cc;box-shadow: inset 0 0 0 1px #d0b0b4;"></div><div class="r" style="left:3px;top:622px;width:60px;height:1px;background:#888;"></div><div class="r" style="left:3px;top:623px;width:60px;height:12.5px;background:#fafafa;"></div><div class="t" style="left:5px;top:624.5px;font-size:8px;line-height:10px;color:#777;transform:scaleX(0.86);font-family:'Liberation Mono',monospace;-webkit-text-stroke:0;">MAXScript Mi:</div><div class="r" style="left:64px;top:606px;width:1.5px;height:33px;background:#333;"></div><div class="t" style="left:68.5px;top:611.5px;font-size:7.5px;line-height:9.5px;color:#e8e8e8;transform:scaleX(0.87);">None Selected</div><div class="t" style="left:68.5px;top:626.5px;font-size:7.5px;line-height:9.5px;color:#e8e8e8;transform:scaleX(0.885);">Click and drag to select and move objects</div><svg class="r" style="left:0;top:0" width="1180" height="664" viewBox="0 0 1180 664"><rect x="629.5" y="610.5" width="10" height="10" fill="none" stroke="#999" stroke-width="0.8" stroke-dasharray="2,1.5"/><rect x="632" y="613" width="5" height="5" fill="none" stroke="#999" stroke-width="0.8"/><rect x="647" y="614" width="6" height="5" fill="#555"/><path d="M648,614 V612 Q650,610 652,612 V614" fill="none" stroke="#666" stroke-width="0.9"/><rect x="663" y="611" width="9" height="9" fill="#111" stroke="#eee" stroke-width="1"/><path d="M667.5,612.5 L670.5,615.5 L667.5,618.5 L664.5,615.5 Z" fill="none" stroke="#eee" stroke-width="1"/><rect x="685" y="610.5" width="35" height="10.5" fill="#5a5a5a"/><rect x="736" y="610.5" width="36" height="10.5" fill="#5a5a5a"/><rect x="787" y="610.5" width="36.5" height="10.5" fill="#5a5a5a"/><rect x="817" y="625" width="13" height="13" rx="1" fill="#5a82bc"/><path d="M820,629 L823.5,627 L827,629 V633 L823.5,635 L820,633 Z" fill="none" stroke="#222" stroke-width="0.9"/><g fill="#e0e0e0"><rect x="902.5" y="611.5" width="1.2" height="7"/><path d="M904.5,615 L908,611.5 V618.5 Z M908,615 L911.5,611.5 V618.5 Z"/><path d="M918,615 L921.5,611.5 V618.5 Z"/><rect x="922.5" y="611.5" width="1.3" height="7"/><rect x="925" y="611.5" width="1.3" height="7"/><path d="M933,611 L941,615 L933,619 Z"/><path d="M941,620 L943,618 V620 Z"/><rect x="948" y="611.5" width="1.3" height="7"/><rect x="950.5" y="611.5" width="1.3" height="7"/><path d="M953,611.5 L956.5,615 L953,618.5 Z"/><path d="M962,611.5 L965.5,615 L962,618.5 Z M965.5,611.5 L969,615 L965.5,618.5 Z"/><rect x="970" y="611.5" width="1.2" height="7"/><path d="M903,629 L906,626.5 V631.5 Z M910,629 L907,626.5 V631.5 Z"/></g><rect x="916.5" y="624.5" width="42.5" height="10" fill="#5a5a5a"/><path d="M954,627.5 L955.5,626 L957,627.5 Z M954,631 L955.5,632.5 L957,631 Z" fill="#ccc"/><circle cx="967" cy="628.5" r="3.5" fill="#ddd"/><path d="M967,625.5 V628.5 H969.5" stroke="#333" stroke-width="0.9" fill="none"/><circle cx="970.5" cy="631.5" r="2.3" fill="#333" stroke="#e8b030" stroke-width="1.2"/><rect x="982" y="610" width="24.5" height="24.5" rx="2" fill="#525252"/><path d="M994,614 V629 M986.5,621.5 H1001.5" stroke="#eee" stroke-width="3.5"/><path d="M996,628 L1001,624" stroke="#40b8a8" stroke-width="1.3"/><circle cx="995.5" cy="628.5" r="1.8" fill="#40b8a8"/><circle cx="1001.5" cy="623.5" r="1.3" fill="#40b8a8"/><rect x="1010.5" y="609.5" width="28" height="11.5" fill="#555"/><rect x="1042.5" y="610" width="68.5" height="11" fill="#5a5a5a"/><path d="M1104,614 H1108 L1106,616.5 Z" fill="#eee"/><rect x="1010.5" y="623.5" width="28" height="12" fill="#555"/><rect x="1058" y="623.5" width="53" height="12.5" fill="#5a5a5a"/><path d="M1044,634 Q1046,624 1049,627 Q1051,630 1053,624" fill="none" stroke="#eee" stroke-width="1"/><circle cx="1045" cy="627" r="1" fill="#40b8a8"/><circle cx="1052" cy="627" r="1" fill="#40b8a8"/><path d="M1054,636 L1056,634 V636 Z" fill="#ddd"/><circle cx="1125" cy="613.3" r="3.3" fill="#222" stroke="#e8e8e8" stroke-width="1.4"/><path d="M1122.6,615.8 L1120.3,619.8" stroke="#e8e8e8" stroke-width="1.6"/><g fill="#3aa890"><rect x="1136.5" y="610.5" width="3" height="3"/><rect x="1140.5" y="610.5" width="2.5" height="3"/><rect x="1140.5" y="614.5" width="2.5" height="3"/></g><circle cx="1138.3" cy="616" r="2.6" fill="none" stroke="#ccc" stroke-width="1.1"/><path d="M1136.5,618 L1134.5,620" stroke="#ccc" stroke-width="1.3"/><path d="M1148,612.5 V610.5 H1150 M1155,610.5 H1157 V612.5 M1157,617.5 V619.5 H1155 M1150,619.5 H1148 V617.5" fill="none" stroke="#e8e8e8" stroke-width="1"/><circle cx="1152.5" cy="615" r="3.6" fill="#3aa890"/><path d="M1150.5,614 L1152.5,616.5 L1154.5,614" stroke="#1a4a40" stroke-width="0.9" fill="none"/><path d="M1157,621 L1159,619 V621 Z" fill="#ddd"/><circle cx="1168.5" cy="613" r="3" fill="#3aa890"/><path d="M1162.5,616.5 L1165,615 L1167,616.5 L1165,618.5 Z" fill="#e8e8e8"/><rect x="1165" y="618" width="3" height="1.8" fill="#e8e8e8"/><path d="M1172,621 L1174,619 V621 Z" fill="#ddd"/><path d="M1121.5,625 L1128.5,629 L1121.5,633 Z" fill="none" stroke="#e0e0e0" stroke-width="1.2" stroke-linejoin="round"/><circle cx="1124.5" cy="629" r="1.2" fill="#111"/><path d="M1128.5,635 L1130.5,633 V635 Z" fill="#ddd"/><circle cx="1138.5" cy="625" r="1.1" fill="#e0e0e0"/><path d="M1138.5,626 L1137.8,629.5 L1135.5,633.5 M1137.8,629.5 L1140.5,633.5 M1136,628 L1140,628.5" stroke="#e0e0e0" stroke-width="1.3" fill="none"/><path d="M1142,635 L1144,633 V635 Z" fill="#ddd"/><path d="M1148.5,628.5 A4,4 0 0 1 1156.5,628.5 Z" fill="#3aa890"/><path d="M1148.5,629 A4,4 0 0 0 1156.5,629" fill="none" stroke="#ccc" stroke-width="1"/><path d="M1149,633 L1157,625" stroke="#ccc" stroke-width="0.9"/><path d="M1157,635 L1159,633 V635 Z" fill="#ddd"/><rect x="1162" y="624" width="9.5" height="9.5" fill="#e4e4e4"/><rect x="1163" y="629.5" width="3.5" height="3.5" fill="#111"/><path d="M1165,631 L1171,625" stroke="#111" stroke-width="0.9"/></svg><div class="t" style="left:677px;top:611px;font-size:7.5px;line-height:9.5px;color:#e8e8e8;transform:scaleX(1.0);font-weight:bold;">X:</div><div class="t" style="left:686.5px;top:611.5px;font-size:7.5px;line-height:9.5px;color:#8a8a8a;transform:scaleX(0.86);">-231,068cm</div><div class="t" style="left:728.5px;top:611px;font-size:7.5px;line-height:9.5px;color:#e8e8e8;transform:scaleX(1.0);font-weight:bold;">Y:</div><div class="t" style="left:737.5px;top:611.5px;font-size:7.5px;line-height:9.5px;color:#8a8a8a;transform:scaleX(0.86);">-439,739cm</div><div class="t" style="left:780px;top:611px;font-size:7.5px;line-height:9.5px;color:#e8e8e8;transform:scaleX(1.0);font-weight:bold;">Z:</div><div class="t" style="left:789px;top:611.5px;font-size:7.5px;line-height:9.5px;color:#7a7a7a;transform:scaleX(0.86);">0,0cm</div><div class="t" style="left:832.5px;top:611.5px;font-size:7.5px;line-height:9.5px;color:#e8e8e8;transform:scaleX(0.87);">Grid = 10,0cm</div><div class="t" style="left:833px;top:626px;font-size:7.5px;line-height:9.5px;color:#e8e8e8;transform:scaleX(0.87);">Add Time Tag</div><div class="t" style="left:919px;top:625px;font-size:7.5px;line-height:9.5px;color:#dcdcdc;transform:scaleX(1.0);">0</div><div class="t" style="left:1012.5px;top:610.5px;font-size:7.5px;line-height:9.5px;color:#bcbcbc;transform:scaleX(0.87);">Auto Key</div><div class="t" style="left:1045px;top:610.5px;font-size:7.5px;line-height:9.5px;color:#e0e0e0;transform:scaleX(0.87);">Selected</div><div class="t" style="left:1013.5px;top:625px;font-size:7.5px;line-height:9.5px;color:#d8d8d8;transform:scaleX(0.87);">Set Key</div><div class="t" style="left:1064px;top:625px;font-size:7.5px;line-height:9.5px;color:#d8d8d8;transform:scaleX(0.87);">Key Filters...</div><div class="r" style="left:0px;top:639.5px;width:1180px;height:24.5px;background:#050505;"></div><svg class="r" style="left:0;top:0" width="1180" height="664" viewBox="0 0 1180 664"><g fill="#f0f0f0"><rect x="10" y="647" width="4.5" height="4.5"/><rect x="15.2" y="646.5" width="4.8" height="5"/><rect x="10" y="652.2" width="4.5" height="4.5"/><rect x="15.2" y="652.2" width="4.8" height="5"/></g><circle cx="45.5" cy="649.5" r="3.6" fill="none" stroke="#eee" stroke-width="1.1"/><path d="M42.8,652.2 L39,656.5" stroke="#eee" stroke-width="1.2"/><rect x="70" y="646.5" width="8" height="10.5" rx="1" fill="none" stroke="#eee" stroke-width="1"/><path d="M67.5,648 V655.5 M80.5,648 V655.5" stroke="#eee" stroke-width="1"/><path d="M98,647.5 L110,645.5 V655 L98,657 Z" fill="#b8d0e8"/><path d="M101,650 L106,651 L104,656 Z" fill="#3a7ac0"/><path d="M100,655 Q104,659 110,657" fill="none" stroke="#eee" stroke-width="1"/><rect x="129.5" y="648" width="11.5" height="10" fill="#f4f4f4"/><g fill="#eee"><rect x="130" y="645" width="2" height="2"/><rect x="133.5" y="645" width="2" height="2"/><rect x="137" y="644.5" width="2" height="2"/></g><text x="130" y="656" font-size="5.5" font-weight="bold" font-family="Liberation Sans" fill="#d04040">1</text><text x="133.5" y="656" font-size="5.5" font-weight="bold" font-family="Liberation Sans" fill="#3060c0">2</text><text x="137" y="656" font-size="5.5" font-weight="bold" font-family="Liberation Sans" fill="#30a040">1</text><circle cx="165.5" cy="651.5" r="6" fill="#f0c020"/><path d="M162.5,654 L165.5,648.5 L168.5,654 Z" fill="none" stroke="#222" stroke-width="1.5"/><circle cx="195.2" cy="651.2" r="6.8" fill="#dd4433"/><path d="M195.2,651.2 L201.2,648 A6.8,6.8 0 0 1 192,657.2 Z" fill="#f4c020"/><path d="M195.2,651.2 L192,657.2 A6.8,6.8 0 0 1 189,648 Z" fill="#2a9a48"/><circle cx="195.2" cy="651.2" r="3" fill="#fff"/><circle cx="195.2" cy="651.2" r="2.2" fill="#3a78d8"/><path d="M219,646 H224 L225.5,647.5 H232 V657 H219 Z" fill="#f0d070"/><rect x="219" y="649.5" width="13" height="7.5" fill="#f8e090"/><rect x="223" y="652" width="5" height="3.5" fill="#4aa0e0"/><rect x="250" y="645.5" width="11.5" height="12" fill="#fafafa"/><path d="M256,657.5 L261.5,652 V657.5 Z" fill="#111"/><rect x="273.5" y="640" width="22.5" height="24" fill="#1e1e1e"/><rect x="273.5" y="640" width="1.5" height="24" fill="#30a040"/><rect x="278.5" y="644.5" width="14.5" height="14" fill="#e8f4f4"/><text x="280" y="656.5" font-size="12" font-weight="bold" font-family="Liberation Sans" fill="#2a9a9a">3</text><path d="M287,646 L292,651 L287,656 Z" fill="#2a9a9a"/><rect x="307" y="644" width="15.5" height="14.5" fill="#0a1a3a"/><rect x="308" y="645" width="8" height="3" fill="#30a0e0"/><text x="311" y="656" font-size="6.5" font-weight="bold" font-family="Liberation Sans" fill="#30a0e0">Ps</text><rect x="331" y="640" width="29" height="24" fill="#2a2a2a"/><rect x="338" y="644.5" width="16" height="14" fill="#e8f4f4"/><text x="341" y="656.5" font-size="13" font-weight="bold" font-family="Liberation Sans" fill="#2a9a9a">3</text><rect x="183" y="662.5" width="25" height="1.5" fill="#8ab8d8"/><rect x="213" y="662.5" width="25" height="1.5" fill="#8ab8d8"/><rect x="243" y="662.5" width="25" height="1.5" fill="#8ab8d8"/><rect x="274" y="662.5" width="22" height="1.5" fill="#40c040"/><rect x="303" y="662.5" width="25" height="1.5" fill="#8ab8d8"/><rect x="332" y="662.5" width="27" height="1.5" fill="#8ab8d8"/><path d="M1059.5,654.5 L1063,651 L1066.5,654.5" fill="none" stroke="#eee" stroke-width="1"/><path d="M1072.5,650 H1074.5 L1077,647.5 V657.5 L1074.5,655 H1072.5 Z" fill="none" stroke="#eee" stroke-width="0.9"/><path d="M1079,650 Q1080.5,652.5 1079,655 M1081,648.5 Q1083.5,652.5 1081,656.5" fill="none" stroke="#eee" stroke-width="0.9"/><path d="M1155,647.5 H1165 V655 H1161 L1160,657 L1159,655 H1155 Z" fill="none" stroke="#eee" stroke-width="0.9"/></svg><div class="t" style="left:1089px;top:647px;font-size:8px;line-height:10px;color:#f0f0f0;transform:scaleX(0.92);">РУС</div><div class="t" style="left:1119px;top:641.5px;font-size:8px;line-height:10px;color:#f0f0f0;transform:scaleX(0.9);">20:59</div><div class="t" style="left:1111px;top:652px;font-size:8px;line-height:10px;color:#f0f0f0;transform:scaleX(0.86);">12.01.2019</div>
</body></html>
